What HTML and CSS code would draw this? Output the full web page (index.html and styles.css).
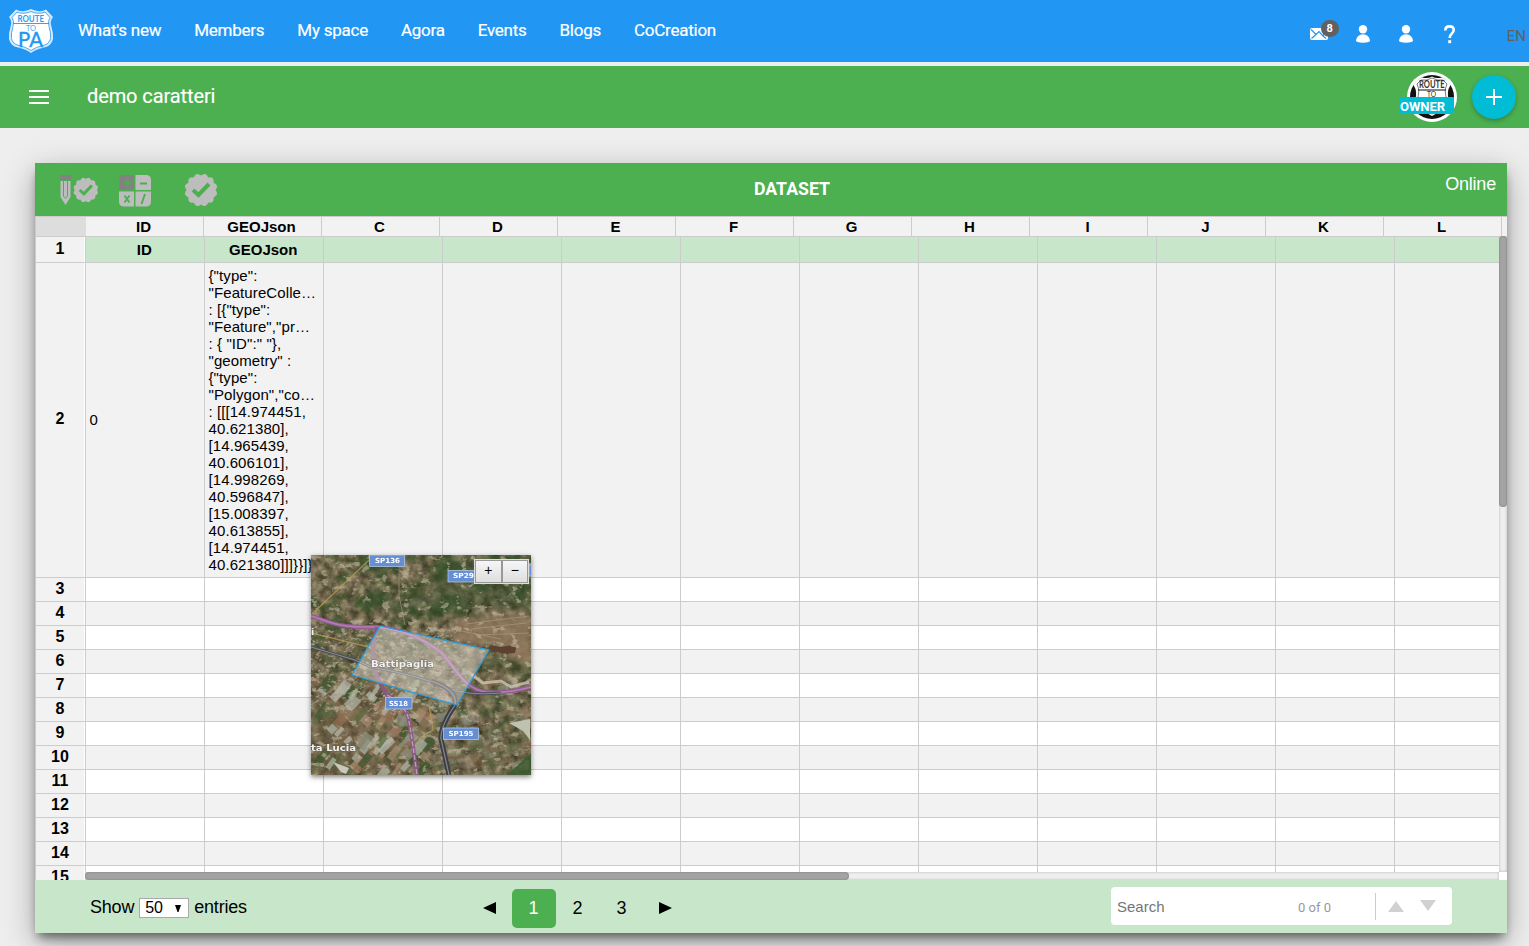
FILE: index.html
```html
<!DOCTYPE html>
<html lang="en">
<head>
<meta charset="utf-8">
<title>demo caratteri</title>
<link rel="stylesheet" href="styles.css">
</head>
<body>
<header class="topnav">
  <svg class="logo" width="46" height="46" viewBox="0 0 46 46">
    <path d="M8 1.500Q11 3.500 15 3.200Q19 3 23 1Q27 3 31 3.200Q35 3.500 38 1.500L45 9Q41.500 13 43.500 19Q45.500 25 45 31Q43.500 38 36 39.500Q28 41 23 45Q18 41 10 39.500Q2.500 38 1 31Q.5 25 2.500 19Q4.500 13 1 9Z" fill="#d5ebfd"/>
    <path d="M9 4Q12 5.500 16 5.200Q20 5 23 3.500Q26 5 30 5.200Q34 5.500 37 4L42 9.500Q39.500 13 41 18.500Q43.200 25 42.500 30.500Q41.500 36 35 37.500Q28 39 23 42.500Q18 39 11 37.500Q4.500 36 3.500 30.500Q2.800 25 5 18.500Q6.500 13 4 9.500Z" fill="#fff" stroke="#3ba0f3" stroke-width=".9"/>
    <path d="M5 15.500H41" stroke="#2196f3" stroke-width=".9"/>
    <text class="lg-a" x="9.500" y="14" textLength="26.500" lengthAdjust="spacingAndGlyphs">ROUTE</text>
    <text class="lg-b" x="18" y="23" textLength="10" lengthAdjust="spacingAndGlyphs">TO</text>
    <text class="lg-c" x="10" y="39" textLength="25" lengthAdjust="spacingAndGlyphs">PA</text>
  </svg>
  <nav class="links">
    <a>What's new</a><a>Members</a><a>My space</a><a>Agora</a><a>Events</a><a>Blogs</a><a>CoCreation</a>
  </nav>
  <div class="tools">
    <span class="mail">
      <svg width="18" height="12" viewBox="0 0 18 12"><rect width="18" height="12" rx="2" fill="#fff"/><path d="M1 1.500L6 6.500L9 3.500L13 8L17 2M1.500 10.500L6 6.500M13 8L16 10.500" fill="none" stroke="#2196f3" stroke-width="1.200"/></svg>
      <span class="badge">8</span>
    </span>
    <svg class="user" width="14" height="18" viewBox="0 0 14 18"><circle cx="7" cy="4.300" r="4.200" fill="#fff"/><path d="M0 15.500Q1 9.500 7 9.300Q13 9.500 14 15.500Q14 17.500 7 17.800Q0 17.500 0 15.500Z" fill="#fff"/></svg>
    <svg class="user" width="14" height="18" viewBox="0 0 14 18"><circle cx="7" cy="4.300" r="4.200" fill="#fff"/><path d="M0 15.500Q1 9.500 7 9.300Q13 9.500 14 15.500Q14 17.500 7 17.800Q0 17.500 0 15.500Z" fill="#fff"/></svg>
    <svg class="help" width="11" height="19" viewBox="0 0 11 19"><path d="M1.300 5.500Q1.300 1.400 5.600 1.400Q9.700 1.400 9.700 5Q9.700 7 7.700 8.800Q5.700 10.400 5.700 13" fill="none" stroke="#fff" stroke-width="2.600"/><rect x="4.200" y="15.200" width="3" height="3" fill="#fff"/></svg>
    <span class="lang">EN</span>
  </div>
</header>

<div class="titlebar">
  <svg class="menu" width="20" height="14" viewBox="0 0 20 14"><path d="M0 1H20M0 7H20M0 13H20" stroke="#fff" stroke-width="2"/></svg>
  <h1>demo caratteri</h1>
  <div class="avatar">
    <svg width="50" height="50" viewBox="0 0 50 50">
      <circle cx="25" cy="25" r="25" fill="#fff"/>
      <circle cx="25" cy="25" r="22" fill="#111"/>
      <path d="M9 9L15 5.500Q21 7 25 4.500Q29 7 35 5.500L41 9L43.500 13Q39 20 42 28Q43 36 36 40Q29 41 25 44Q21 41 14 40Q7 36 8 28Q11 20 6.500 13Z" fill="#fff"/>
      <path d="M14 8Q20 9 25 6Q30 9 36 8L40 12Q36.500 19 40 28Q41 36 33 38.500Q28 39.500 25 42Q22 39.500 17 38.500Q9 36 10 28Q13.500 19 10 12Z" fill="#fff" stroke="#555" stroke-width=".8"/>
      <path d="M11 18H39" stroke="#333" fill="none" stroke-width="1.200"/>
      <text class="av-a" x="12" y="16.300" textLength="25.500" lengthAdjust="spacingAndGlyphs">ROUTE</text>
      <text class="av-b" x="20" y="24.800" textLength="9" lengthAdjust="spacingAndGlyphs">TO</text>
    </svg>
    <span class="owner">OWNER</span>
  </div>
  <div class="add"><svg width="16" height="16" viewBox="0 0 16 16"><path d="M8 0V16M0 8H16" stroke="#fff" stroke-width="2"/></svg></div>
</div>

<main class="panel">
  <div class="panel-head">
    <div class="actions">
      <svg width="38" height="32" viewBox="0 0 38 32">
        <rect x="0" y="1" width="11" height="5" fill="#828282"/>
        <path d="M.5 7H10.500V23L5.500 31L.5 23Z" fill="#bdbdbd"/>
        <path d="M3.500 7V22Q5.500 26 7.500 22V7" fill="none" stroke="#4caf50" stroke-width="1"/>
        <g class="seal" transform="translate(25.800 16) scale(.76)"></g>
      </svg>
      <svg class="calc" width="32" height="32" viewBox="0 0 32 32">
        <path d="M5 0H15V15H0V5Q0 0 5 0Z" fill="#828282"/>
        <path d="M16.500 0H27Q32 0 32 5V15H16.500ZM0 16.500H15V31.500H5Q0 31.500 0 26.500ZM16.500 16.500H32V26.500Q32 31.500 27 31.500H16.500Z" fill="#bdbdbd"/>
        <path d="M5 8H12M8.500 4.500V11.500M21 8.500H28M5.500 20.500L10.500 27.500M10.500 20.500L5.500 27.500M26 19L22.500 29" stroke="#4caf50" stroke-width="1.900" fill="none"/>
      </svg>
      <svg class="ok" width="34" height="34" viewBox="0 0 34 34"><g class="seal" transform="translate(17 17)"></g></svg>
    </div>
    <h2>DATASET</h2>
    <span class="online">Online</span>
  </div>

  <div class="sheet">
    <div class="cols" id="cols"><span class="corner"></span></div>
    <div class="rows" id="rows"></div>
    <div class="vtrack"><div class="vthumb"></div></div>
    <div class="htrack"><div class="hthumb"></div></div>
  </div>

  <div class="foot">
    <div class="show"><span>Show</span><span class="select">50<svg width="6" height="7" viewBox="0 0 6 7"><path d="M0 0H6L3.500 7H2.500Z"/></svg></span><span>entries</span></div>
    <div class="pager">
      <span><svg width="13" height="12" viewBox="0 0 13 12"><path d="M13 0V12L0 6Z"/></svg></span>
      <span class="on">1</span><span>2</span><span>3</span>
      <span><svg width="13" height="12" viewBox="0 0 13 12"><path d="M0 0V12L13 6Z"/></svg></span>
    </div>
    <div class="search">
      <span class="ph">Search</span><span class="count">0 of 0</span>
      <span class="arrows">
        <svg width="16" height="11" viewBox="0 0 16 11"><path d="M0 11H16L8 0Z" fill="#d0d1d3"/></svg>
        <svg class="down" width="16" height="11" viewBox="0 0 16 11"><path d="M0 0H16L8 11Z" fill="#d0d1d3"/></svg>
      </span>
    </div>
  </div>

  <div class="map">
    <svg width="220" height="220" viewBox="0 0 220 220">
      <defs>
        <filter id="grain" x="0" y="0" width="100%" height="100%" color-interpolation-filters="sRGB">
          <feTurbulence type="fractalNoise" baseFrequency=".11" numOctaves="5" seed="7"/>
          <feColorMatrix values=".62 .2 0 0 .03  .55 .22 0 0 .02  .5 .15 0 0 -.02  0 0 0 0 1"/>
        </filter>
        <filter id="woods" x="0" y="0" width="100%" height="100%" color-interpolation-filters="sRGB">
          <feTurbulence type="fractalNoise" baseFrequency=".035 .05" numOctaves="5" seed="21"/>
          <feColorMatrix values="0 0 0 0 .2  0 0 0 0 .31  0 0 0 0 .15  0 6 0 0 -2.900"/>
        </filter>
        <filter id="spots" x="0" y="0" width="100%" height="100%" color-interpolation-filters="sRGB">
          <feTurbulence type="fractalNoise" baseFrequency=".1 .14" numOctaves="4" seed="4"/>
          <feColorMatrix values="0 0 0 0 .76  0 0 0 0 .72  0 0 0 0 .62  0 0 9 0 -5.500"/>
        </filter>
        <filter id="soft"><feGaussianBlur stdDeviation="3"/></filter>
        <filter id="blend"><feGaussianBlur stdDeviation=".45"/></filter>
        <linearGradient id="fade" x1="0" y1="0" x2="0" y2="1"><stop offset="0" stop-color="#fff"/><stop offset=".3" stop-color="#eee"/><stop offset=".45" stop-color="#666"/><stop offset="1" stop-color="#666"/></linearGradient>
        <mask id="north"><rect width="220" height="220" fill="url(#fade)"/></mask>
      </defs>
      <rect width="220" height="220" filter="url(#grain)"/>
      <g mask="url(#north)"><rect width="220" height="220" filter="url(#woods)" opacity=".75"/></g>
      <g filter="url(#soft)">
        <path d="M130 0H220V56L170 50L150 60L95 60L40 45L65 30L85 45L120 40Z" fill="#35502a" opacity=".45"/>
        <path d="M150 64L220 58V112L180 92L145 88L135 78Z" fill="#92795e" opacity=".8"/>
        <path d="M0 122L60 122L100 145L100 220H0Z" fill="#7b6149" opacity=".35"/>
      </g>
      <path d="M178 90L190 92L206 89L204 98L194 99L178 95Z" fill="#5d4331" filter="url(#blend)"/>
      <path d="M155 69L218 61M160 74L215 68M165 80L218 78M150 76L190 84" stroke="#bba58a" stroke-width="1.200" opacity=".5" filter="url(#blend)"/>
      <g id="fields" filter="url(#blend)"></g>
      <rect width="220" height="220" filter="url(#spots)" opacity=".6"/>
      <g filter="url(#blend)">
        <path d="M198 168L219 164V185L212 176Z" fill="#bfc1b1"/>
        <path d="M22 207L38 213L35 219L30 217Z" fill="#c9c8bb"/>
        <path d="M196 220L220 198V220Z" fill="#34562a" opacity=".8"/>
        <path d="M160 119L172 128L190 126L200 132L218 127" fill="none" stroke="#cdc5b0" stroke-width="3" opacity=".8"/>
      </g>
      <g fill="none">
        <path d="M0 60L58 5M0 78L58 92L90 116M105 185L122 175L118 150" stroke="#b79f51" stroke-width="1.300" opacity=".75"/>
        <path d="M88 12V40L94 70M0 150L40 122" stroke="#b5ab95" stroke-width="1" opacity=".5"/>
        <path d="M0 61C15 65 22 73 66 72C95 75 112 84 131 98C148 119 155 134 175 137Q195 139 220 132" stroke="#915c92" stroke-width="4"/>
        <path d="M0 61C15 65 22 73 66 72C95 75 112 84 131 98C148 119 155 134 175 137Q195 139 220 132" stroke="#b47eb4" stroke-width="1.500"/>
        <path d="M66 72Q58 98 66 122L76 140Q95 150 98 166Q102 190 106 220" stroke="#8a5787" stroke-width="4" opacity=".85"/>
        <path d="M76 140Q95 150 98 166Q102 190 106 220" stroke="#c09abc" stroke-width="1.300" stroke-dasharray="5 2"/>
        <path d="M0 92L44 105L60 112Q110 121 137 133Q155 141 190 138" stroke="#4e4e56" stroke-width="3"/>
        <path d="M0 92L44 105L60 112Q110 121 137 133Q155 141 190 138" stroke="#8b8b93" stroke-width="1"/>
        <path d="M120 126Q147 135 144 150Q129 172 130 184L138 220" stroke="#3e3e46" stroke-width="5"/>
        <path d="M120 126Q147 135 144 150Q129 172 130 184L138 220" stroke="#85858d" stroke-width="1.200"/>
      </g>
      <path d="M69 71L178 95L146 150L41 120Z" fill="#ded8ce" fill-opacity=".48" stroke="#2a9bdc" stroke-width="1.200"/>
      <g class="sign">
        <rect x="58.500" y="0" width="35" height="11.500"/><rect x="137" y="15.500" width="34" height="11.500"/><rect x="74.500" y="142.500" width="26.500" height="11.500"/><rect x="132.500" y="173" width="35" height="11.500"/><rect x="218" y="10" width="6" height="11"/>
        <text x="64" y="8.300" textLength="25" lengthAdjust="spacingAndGlyphs">SP136</text>
        <text x="142" y="23.300" textLength="21" lengthAdjust="spacingAndGlyphs">SP29</text>
        <text x="78" y="150.500" textLength="19" lengthAdjust="spacingAndGlyphs">SS18</text>
        <text x="137.500" y="180.800" textLength="25" lengthAdjust="spacingAndGlyphs">SP195</text>
      </g>
      <g class="place">
        <text x="60" y="112" textLength="63" lengthAdjust="spacingAndGlyphs">Battipaglia</text>
        <text x="0" y="196" textLength="45" lengthAdjust="spacingAndGlyphs">ta Lucia</text>
        <text x="0" y="80">i</text>
      </g>
    </svg>
    <div class="zoom"><span>+</span><span>−</span></div>
  </div>
</main>
<script src="script.js"></script>
</body>
</html>
```
FILE: styles.css
```css
* { box-sizing: border-box; }
body {
  margin: 0;
  height: 946px;
  overflow: hidden;
  background: #eee;
  font-family: Roboto, "Liberation Sans", sans-serif;
}
svg { display: block; flex: none; }

.topnav {
  display: flex;
  height: 62px;
  padding-left: 8px;
  background: #2196f3;
  color: #fff;
}
.logo { margin-top: 8px; }
.logo text, .avatar text { font-family: Lato, sans-serif; }
.lg-a { font-size: 10px; font-weight: 700; fill: #2f9cf4; }
.lg-b { font-size: 8px; fill: #4aa9f5; }
.lg-c { font-size: 21px; fill: #2196f3; stroke: #2196f3; stroke-width: .4px; }
.links {
  display: flex;
  gap: 33px;
  padding: 20px 0 0 24px;
  font-size: 17px;
  line-height: 20px;
  letter-spacing: -.25px;
  white-space: nowrap;
  -webkit-text-stroke: .2px #fff;
}
.tools { display: flex; flex: 1; justify-content: flex-end; }
.mail { position: relative; margin: 28px 28px 0 0; width: 18px; }
.badge {
  position: absolute;
  left: 11px;
  top: -8px;
  width: 18px;
  height: 17px;
  border-radius: 9px;
  background: #616161;
  font: 700 11px/17px Roboto, sans-serif;
  text-align: center;
}
.user { margin: 25px 29px 0 0; }
.help { margin: 25px 52px 0 2px; }
.lang { margin: 26px 3px 0 0; color: #616161; font-size: 15px; line-height: 20px; }

.titlebar {
  display: flex;
  height: 62px;
  margin-top: 4px;
  padding-left: 29px;
  background: #4caf50;
  color: #fff;
}
.menu { margin-top: 24px; }
.titlebar h1 {
  flex: 1;
  margin: 18px 0 0 38px;
  font-size: 20px;
  font-weight: 400;
  line-height: 24px;
  letter-spacing: -.1px;
  -webkit-text-stroke: .15px #fff;
}
.avatar { position: relative; margin: 6px 15px 0 0; }
.av-a { font-size: 10.500px; font-weight: 700; fill: #333; }
.av-b { font-size: 8px; fill: #333; }
.owner {
  position: absolute;
  left: -7px;
  top: 25px;
  width: 54px;
  height: 17px;
  background: #00bcd4;
  font: 700 13px/20px Roboto, sans-serif;
}
.add {
  display: flex;
  width: 44px;
  height: 44px;
  margin: 9px 13px 0 0;
  align-items: center;
  justify-content: center;
  border-radius: 50%;
  background: #00bcd4;
  box-shadow: 0 2px 4px rgba(0, 0, 0, .25);
}

.panel {
  position: relative;
  width: 1472px;
  height: 770px;
  margin: 35px 0 0 35px;
  box-shadow: 0 10px 30px rgba(0, 0, 0, .3), 0 7px 10px -3px rgba(0, 0, 0, .5);
  font-family: "Liberation Sans", sans-serif;
}
.panel-head {
  display: grid;
  grid-template-columns: 1fr auto 1fr;
  height: 53px;
  padding: 0 11px 0 25px;
  background: #4caf50;
  color: #fff;
}
.actions { display: flex; padding-top: 11px; }
.calc { margin: 1px 0 0 20.500px; }
.ok { margin: -1px 0 0 33px; }
.panel-head h2 { margin: 16px 0 0 28px; font: 700 17.700px/21px Roboto, sans-serif; }
.online { padding-top: 11px; font-size: 18px; line-height: 20px; text-align: right; letter-spacing: -.2px; }

.sheet {
  position: relative;
  height: 664px;
  overflow: hidden;
  border-left: 1px solid #ccc;
  background: #fff;
}
.cols {
  display: flex;
  height: 21px;
  border: solid #ccc;
  border-width: 1px 0;
  background: #f2f2f2;
}
.cols span {
  flex: none;
  width: 118px;
  padding-right: 2px;
  border-right: 1px solid #ccc;
  font-size: 15px;
  font-weight: 700;
  line-height: 20px;
  text-align: center;
}
.cols .corner { width: 50px; border: 0; background: #ddd; }
.row { display: flex; height: 24px; }
.row.first { height: 26px; }
.row.data { height: 315px; }
.row > * { flex: none; border-bottom: 1px solid #ccc; }
.num {
  display: flex;
  width: 48px;
  padding-bottom: 2px;
  align-items: center;
  justify-content: center;
  background: #f2f2f2;
  font-size: 16px;
  font-weight: 700;
}
.first .num { padding-bottom: 1px; }
.gut { width: 2px; border-right: 1px solid #ccc; background: #fff; }
.cell {
  width: 119px;
  padding: 0 4px 0 3.500px;
  border-right: 1px solid #ccc;
  font-size: 15px;
  line-height: 17px;
}
.even .cell { background: #f2f2f2; }
.first .cell { padding-right: 5px; background: #c8e6c9; font-weight: 700; line-height: 25px; text-align: center; }
.data .cell { display: flex; align-items: center; }
.data .zero { padding-bottom: 2px; }
.json { white-space: nowrap; letter-spacing: .1px; }
.vtrack {
  position: absolute;
  left: 1463px;
  top: 21px;
  width: 8px;
  height: 635px;
  background: #efefef;
  box-shadow: inset 0 0 3px rgba(0, 0, 0, .25);
}
.vthumb { height: 271px; margin-top: -1px; border-radius: 4px; background: #a3a3a3; box-shadow: inset 0 0 2px rgba(0, 0, 0, .3); }
.htrack {
  position: absolute;
  left: 49px;
  top: 656px;
  width: 1414px;
  height: 8px;
  background: #efefef;
  box-shadow: inset 0 0 3px rgba(0, 0, 0, .25), 8px 0 #fff;
}
.hthumb { width: 764px; height: 8px; border-radius: 4px; background: #a3a3a3; box-shadow: inset 0 0 2px rgba(0, 0, 0, .3); }

.foot {
  display: grid;
  grid-template-columns: 433px 643px 341px;
  height: 53px;
  background: #c8e6c9;
}
.show {
  display: flex;
  gap: 5px;
  padding: 17px 0 0 55px;
  font-size: 18px;
  line-height: 20px;
  letter-spacing: -.2px;
}
.select {
  display: flex;
  width: 50px;
  height: 20px;
  margin-top: 1px;
  padding: 0 7px 0 5px;
  align-items: center;
  justify-content: space-between;
  border: 1px solid #a9a9a9;
  background: #fff;
  font-size: 16px;
}
.pager { display: flex; padding-top: 9px; font-size: 18px; line-height: 39px; }
.pager span { display: flex; width: 44px; height: 39px; padding: 0 1px 1px 0; align-items: center; justify-content: center; }
.pager .on { border-radius: 5px; background: #4caf50; color: #fff; }
.search {
  display: flex;
  height: 38px;
  margin-top: 7px;
  padding-left: 6px;
  border-radius: 4px;
  background: #fff;
  line-height: 40px;
}
.ph { width: 181px; color: #757575; font-size: 15px; }
.count { width: 77px; color: #999; font: 13px/41px Roboto, sans-serif; }
.arrows { display: flex; height: 27px; margin-top: 6px; padding: 8px 0 0 11.500px; border-left: 1px solid #ccc; }
.down { margin: -1px 0 0 16px; }

.map {
  position: absolute;
  left: 276px;
  top: 392px;
  width: 220px;
  height: 220px;
  background: #6b6650;
  box-shadow: 0 2px 5px rgba(0, 0, 0, .5);
}
.sign rect { fill: #668fd3; stroke: #b9cdec; stroke-width: .7; }
.sign text { fill: #fff; font: 700 7px "DejaVu Sans", sans-serif; }
.place text {
  fill: #f3f1ed;
  stroke: #55554d;
  stroke-width: 1px;
  stroke-opacity: .55;
  paint-order: stroke;
  font: 700 9.500px "DejaVu Sans", sans-serif;
}
.zoom {
  position: absolute;
  left: 163px;
  top: 4px;
  display: flex;
  width: 55px;
  height: 25px;
  padding: 1px;
  background: #ddd;
}
.zoom span {
  flex: 1;
  border: 1px solid #999;
  background: linear-gradient(#f6f6f6, #dedede);
  font-size: 14px;
  line-height: 19px;
  text-align: center;
}
```
FILE: script.js
```js
const labels = ['ID', 'GEOJson', 'C', 'D', 'E', 'F', 'G', 'H', 'I', 'J', 'K', 'L'];
const cols = document.getElementById('cols');
labels.forEach(label => {
  const span = document.createElement('span');
  span.textContent = label;
  cols.append(span);
});

const json = [
  '{"type":', '"FeatureColle…', ': [{"type":', '"Feature","pr…', ': { "ID":" "},', '"geometry" :',
  '{"type":', '"Polygon","co…', ': [[[14.974451,', '40.621380],', '[14.965439,', '40.606101],',
  '[14.998269,', '40.596847],', '[15.008397,', '40.613855],', '[14.974451,', '40.621380]]]}}]}'
].join('<br>');

const rows = document.getElementById('rows');
for (let n = 1; n <= 15; n++) {
  let html = `<div class="num">${n}</div><div class="gut"></div>`;
  for (let c = 0; c < 12; c++) {
    let text = '';
    if (n === 1 && c < 2) text = labels[c];
    if (n === 2 && c === 0) text = '0';
    if (n === 2 && c === 1) text = `<div class="json">${json}</div>`;
    html += `<div class="cell${text === '0' ? ' zero' : ''}">${text}</div>`;
  }
  const row = document.createElement('div');
  row.className = 'row' + (n === 1 ? ' first' : '') + (n === 2 ? ' data' : '') + (n % 2 ? '' : ' even');
  row.innerHTML = html;
  rows.append(row);
}

// Scalloped seal with a check mark
let d = '';
for (let i = 0; i < 12; i++) {
  const a = (i * Math.PI) / 6, b = a + Math.PI / 12, e = a + Math.PI / 6;
  if (!i) d = 'M14.5 0';
  d += `Q${(19 * Math.cos(b)).toFixed(2)} ${(19 * Math.sin(b)).toFixed(2)} ${(14.5 * Math.cos(e)).toFixed(2)} ${(14.5 * Math.sin(e)).toFixed(2)}`;
}
document.querySelectorAll('.seal').forEach(g => {
  g.innerHTML = `<path d="${d}Z" fill="#bdbdbd"/><path d="M-8 0L-2.500 5L8 -6" fill="none" stroke="#4caf50" stroke-width="4"/>`;
});

// Farmland parcels and rooftops on the aerial map
let seed = 11;
const rnd = () => (seed = (seed * 16807) % 2147483647) / 2147483647;
const tones = ['#9a7359', '#8d8f7c', '#abb0a2', '#5c6e42', '#7b6b4c', '#3f5530', '#a68a6d', '#8f6b50', '#b3b6a8'];
let parcels = '';
for (let i = 0; i < 190; i++) {
  const x = rnd() * 220, y = 125 + rnd() * 95, w = 5 + rnd() * 15, h = 3 + rnd() * 8;
  const angle = x < 115 ? -58 + rnd() * 14 : -20 + rnd() * 12;
  parcels += `<rect x="${x.toFixed(1)}" y="${y.toFixed(1)}" width="${w.toFixed(1)}" height="${h.toFixed(1)}" fill="${tones[Math.floor(rnd() * 9)]}" opacity="${x < 115 ? .75 : .35}" transform="rotate(${angle.toFixed(0)} ${x.toFixed(1)} ${y.toFixed(1)})"/>`;
}
for (let i = 0; i < 500; i++) {
  const x = rnd() * 150, y = 72 + rnd() * 85;
  parcels += `<rect x="${x.toFixed(1)}" y="${y.toFixed(1)}" width="${(1 + rnd() * 3).toFixed(1)}" height="1.2" fill="#c4bbab" opacity=".5" transform="rotate(${(rnd() * 90 - 45).toFixed(0)} ${x.toFixed(1)} ${y.toFixed(1)})"/>`;
}
document.getElementById('fields').innerHTML = parcels;
```
